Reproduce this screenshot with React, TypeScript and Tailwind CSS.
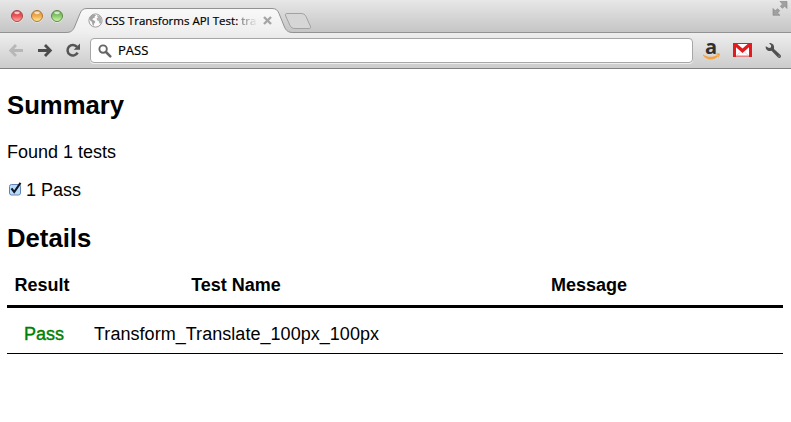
import React from "react";

function Light({ id, rim, dark, mid, glow }: { id: string; rim: string; dark: string; mid: string; glow: string }) {
  return (
    <svg className="block h-[14px] w-[14px]" viewBox="0 0 14 14">
      <defs>
        <linearGradient id={id} x1="0" y1="0" x2="0" y2="1">
          <stop offset="0" stopColor={dark} />
          <stop offset="0.5" stopColor={mid} />
          <stop offset="1" stopColor={glow} />
        </linearGradient>
      </defs>
      <circle cx="7" cy="7.6" r="6.2" fill="#f4f4f4" opacity="0.7" />
      <circle cx="7" cy="7" r="5.5" fill={`url(#${id})`} stroke={rim} strokeWidth="1" />
      <ellipse cx="7" cy="3.8" rx="2.8" ry="1.4" fill="#fff" opacity="0.7" />
    </svg>
  );
}

function TabShapes() {
  return (
    <svg className="absolute left-0 top-0 h-[34px] w-[330px]" viewBox="0 0 330 34">
      <defs>
        <linearGradient id="tabFill" x1="0" y1="8" x2="0" y2="34" gradientUnits="userSpaceOnUse">
          <stop offset="0" stopColor="#f9f9f9" />
          <stop offset="1" stopColor="#eeeeee" />
        </linearGradient>
      </defs>
      <path
        d="M66 34V32.5C71 32.5 73 30.5 74.5 27L80 13.5C81.5 10 83 8.5 87 8.5H272C276 8.5 277.5 10 279 13.5L284.5 27C286 30.5 288 32.5 293 32.5V34Z"
        fill="url(#tabFill)"
      />
      <path
        d="M66 32.5C71 32.5 73 30.5 74.5 27L80 13.5C81.5 10 83 8.5 87 8.5H272C276 8.5 277.5 10 279 13.5L284.5 27C286 30.5 288 32.5 293 32.5"
        fill="none"
        stroke="#929292"
      />
      <path
        d="M287 13.5H301C303.5 13.5 305 14.5 306 16.5L310.3 26C311 27.7 310.5 28.5 309 28.5H295C292.5 28.5 291 27.5 290 25.5L285.7 16C285 14.4 285.5 13.5 287 13.5Z"
        fill="#d6d6d6"
        stroke="#a2a2a2"
      />
    </svg>
  );
}

function Globe() {
  return (
    <svg className="h-[15px] w-[15px] shrink-0" viewBox="0 0 15 15">
      <circle cx="7.5" cy="7.5" r="6.6" fill="#fafafa" stroke="#929292" strokeWidth="0.9" />
      <path d="M2 4L4 2L7 1.5L8 2.6L6.5 3.5L6.8 4.7L5 5.3L4.3 6.7L6.2 7.4L7.4 9L6 10.7L5.8 13L4.4 11.6L4 9L2.2 7.5L1.3 6Z" fill="#a3a3a3" />
      <path d="M9.5 2L12 3.2L13.5 6L13.4 9L12.2 11L11 9.6L10.8 7.9L9 7.3L8.7 5.6L10 4.5L9.2 3.3Z" fill="#b0b0b0" />
    </svg>
  );
}

function NavArrow({ color, back }: { color: string; back?: boolean }) {
  return (
    <svg className={back ? "h-[14px] w-[16px] -scale-x-100" : "h-[14px] w-[16px]"} viewBox="0 0 16 14">
      <path d="M1 6.5H13M8 1L13.3 6.5L8 12" fill="none" stroke={color} strokeWidth="2.8" />
    </svg>
  );
}

function Reload() {
  return (
    <svg className="h-[16px] w-[16px]" viewBox="0 0 16 16">
      <path d="M12 3.9A5.3 5.3 0 1 0 12.6 9.6" fill="none" stroke="#555" strokeWidth="2.5" />
      <path d="M15 0.5V6.8H8.7Z" fill="#555" />
    </svg>
  );
}

function Search() {
  return (
    <svg className="h-[14px] w-[14px] shrink-0" viewBox="0 0 14 14">
      <circle cx="5.1" cy="5.1" r="3.7" fill="none" stroke="#666" strokeWidth="1.9" />
      <path d="M8 8L12.3 12.3" stroke="#666" strokeWidth="2.5" strokeLinecap="round" />
    </svg>
  );
}

function Amazon() {
  return (
    <span className="relative block h-[20px] w-[19px]">
      <span className="absolute left-[3px] top-[-4px] font-['Open_Sans',sans-serif] text-[20px] font-bold leading-[20px] text-[#303030]">a</span>
      <svg className="absolute left-0 top-0 h-[20px] w-[19px]" viewBox="0 0 19 20">
        <path d="M1 13.5C5.5 16.5 11 16.5 15.5 14L16 15.5C11.500 19.800 5 19.500 1 14.600Z" fill="#f5a13c" />
        <path d="M12.800 13C15.500 12 17.500 12.200 17.800 12.800C18.200 13.700 17.300 15.700 16 17L16.300 14Z" fill="#f5a13c" />
      </svg>
    </span>
  );
}

function Gmail() {
  return (
    <svg className="h-[14px] w-[19px]" viewBox="0 0 19 14">
      <rect width="19" height="14" fill="#e01c20" />
      <path d="M3 12.8V4.2L9.5 10L16 4.2V12.8Z" fill="#fff" />
      <path d="M4.3 1H14.7L9.5 5.6Z" fill="#fff" />
      <path d="M3.5 12.7L7.5 9M15.5 12.7L11.5 9" stroke="#efb4b4" strokeWidth="0.7" />
      <path d="M3 13.4H16" stroke="#e98080" strokeWidth="1.2" />
    </svg>
  );
}

function Wrench() {
  return (
    <svg className="h-[17px] w-[17px]" viewBox="0 0 17 17">
      <path d="M4 1L6.2 3.4L5.9 5.4L4 5.9L0.7 4.3C0.3 7.7 3 9.7 6.5 8.8L13 15.5C14.6 16.9 17 14.7 15.5 12.9L9 7C9.7 3 7.5 0.8 4 1Z" fill="#505050" />
      <circle cx="14" cy="14.1" r="0.7" fill="#aaa" />
    </svg>
  );
}

function BrowserBar() {
  return (
    <header className="relative flex h-[69px] flex-col border-b border-[#828282] font-['Open_Sans',sans-serif]">
      <div className="flex h-[33px] border-b border-[#929292] bg-linear-to-b from-[#e7e7e7] to-[#c5c5c5]">
        <TabShapes />
        <div className="flex gap-[6px] pl-[10px] pt-[9px]">
          <Light id="red" rim="#a5484a" dark="#c5383d" mid="#ed5659" glow="#ffb0aa" />
          <Light id="amber" rim="#a97638" dark="#d08a38" mid="#f1ad4d" glow="#ffeca0" />
          <Light id="green" rim="#5d8848" dark="#5f9e4c" mid="#8aca6d" glow="#d4fbb0" />
        </div>
        <div className="relative ml-[24px] mt-[13px] flex h-[15px] w-[186px] items-center">
          <Globe />
          <span className="ml-[2px] w-[157px] whitespace-nowrap text-[11.5px] leading-[15px] text-black [-webkit-text-stroke:0.2px]">
            CSS Transforms API Test: <span className="bg-linear-to-r from-[#777777] to-[#e4e4e4] bg-clip-text text-transparent">tra</span>
          </span>
          <svg className="ml-[1px] h-[9px] w-[9px] shrink-0" viewBox="0 0 9 9">
            <path d="M1 1L8 8M8 1L1 8" stroke="#a5a5a5" strokeWidth="2.4" />
          </svg>
        </div>
        <svg className="ml-auto mr-[3px] mt-px h-[15px] w-[16px]" viewBox="0 0 16 15">
          <path d="M8 0.5H15V7.5L12.7 5.2L10.4 7.3L8.3 5.2L10.5 3ZM1 7.5L3.3 9.8L5.6 7.7L7.7 9.8L5.5 12L8 14.3H1Z" fill="#a0a0a0" stroke="#858585" strokeWidth="0.6" />
        </svg>
      </div>
      <div className="flex h-[35px] items-center bg-linear-to-b from-[#eeeeee] to-[#cccccc] pl-[8px]">
        <NavArrow color="#b7b7b7" back />
        <span className="ml-[13px] flex"><NavArrow color="#4c4c4c" /></span>
        <span className="ml-[12px] flex"><Reload /></span>
        <div className="ml-[9px] flex h-[25px] w-[603px] items-center rounded-[4px] border border-[#a6a6a6] bg-white pl-[7px] shadow-[0_1px_0_#eeeeee]">
          <Search />
          <span className="ml-[6px] pb-[2px] text-[13px] leading-[20px] text-black [-webkit-text-stroke:0.2px]">PASS</span>
        </div>
        <span className="ml-[9px]"><Amazon /></span>
        <span className="ml-[12px] pb-px"><Gmail /></span>
        <span className="ml-[13px]"><Wrench /></span>
      </div>
    </header>
  );
}

export default function App() {
  return (
    <div className="h-[422px] w-[791px] overflow-hidden bg-white font-['Liberation_Sans',Arial,sans-serif] text-[18px] leading-[20px] text-black">
      <BrowserBar />
      <main className="px-[7px] pt-[21px]">
        <h2 className="text-[25.7px] font-bold leading-[30px]">Summary</h2>
        <p className="mt-[22px]">Found 1 tests</p>
        <label className="mt-[18px] flex items-center">
          <svg className="mb-[3px] mr-[4px] h-[15px] w-[15px]" viewBox="0 0 15 15">
            <rect x="2.5" y="3.5" width="11" height="10.5" rx="2" fill="#b9dcf8" stroke="#6582b4" />
            <path d="M4.5 7.3L7.2 11L13.5 1.8" fill="none" stroke="#10182c" strokeWidth="2.1" />
          </svg>
          <span>1 Pass</span>
        </label>
        <h2 className="mt-[23px] text-[25.7px] font-bold leading-[30px]">Details</h2>
        <table className="mt-[14px] w-[776px] table-fixed border-collapse">
          <colgroup>
            <col className="w-[71px]" />
            <col className="w-[316px]" />
            <col />
          </colgroup>
          <thead>
            <tr className="h-[39px] border-b-[3px] border-black align-top font-bold">
              <th className="pr-px pt-[8px] text-center">Result</th>
              <th className="pt-[8px] text-center">Test Name</th>
              <th className="pl-px pt-[8px] text-center">Message</th>
            </tr>
          </thead>
          <tbody>
            <tr className="h-[47px] border-b border-black align-top">
              <td className="pl-[3px] pt-[16px] text-center text-[#008000] [-webkit-text-stroke:0.4px]">Pass</td>
              <td className="pl-[16px] pt-[16px] tracking-[0.04px]">Transform_Translate_100px_100px</td>
              <td />
            </tr>
          </tbody>
        </table>
      </main>
    </div>
  );
}
